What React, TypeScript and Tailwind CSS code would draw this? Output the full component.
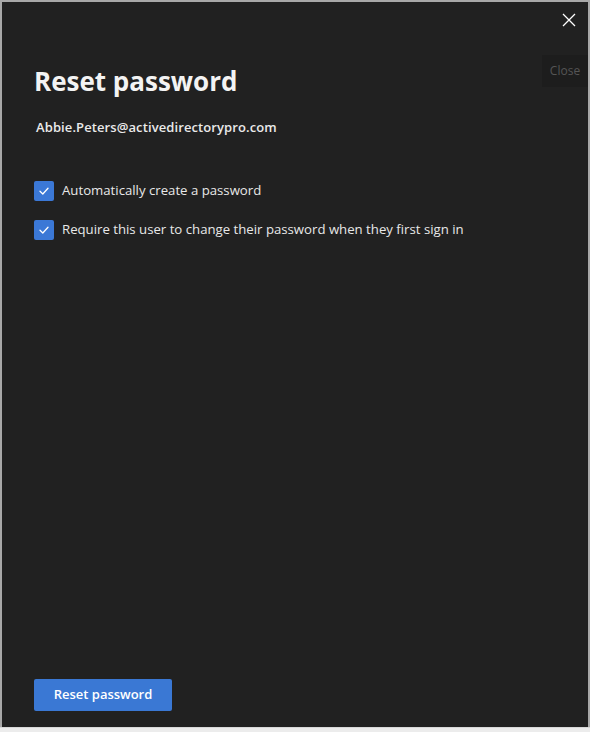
import React, { useState } from 'react';

const Check: React.FC<{ checked: boolean; onToggle: () => void; label: string }> = ({ checked, onToggle, label }) => (
    <label className="flex items-center gap-2 cursor-pointer" onClick={onToggle}>
        <span className={`w-5 h-5 rounded-[2px] flex items-center justify-center ${checked ? 'bg-[#3b78d6]' : 'border border-[#aaa]'}`}>
            {checked && (
                <svg width="12" height="12" viewBox="0 0 12 12" fill="none">
                    <path d="M2 6.3 L4.8 9 L10 3.2" stroke="white" strokeWidth="1.3" strokeLinecap="round" strokeLinejoin="round" />
                </svg>
            )}
        </span>
        <span className="text-[13.2px] text-[#e8e8e8]">{label}</span>
    </label>
);

export default function App() {
    const [auto, setAuto] = useState(true);
    const [require, setRequire] = useState(true);

    return (
        <div className="w-[590px] h-[732px] bg-[#a8a8a8] flex flex-col" style={{ fontFamily: '"Open Sans", "Noto Sans", sans-serif' }}>
            <div className="relative mx-[2px] mt-[2px] h-[725px] bg-[#212121] flex flex-col px-[32px]">
                {/* Close button + tooltip */}
                <button className="absolute right-[10px] top-[9px] w-[18px] h-[18px] flex items-center justify-center text-white">
                    <svg width="14" height="14" viewBox="0 0 14 14" fill="none">
                        <path d="M1 1 L13 13 M13 1 L1 13" stroke="white" strokeWidth="1.3" />
                    </svg>
                </button>
                <div className="absolute right-0 top-[53px] w-[46px] h-[32px] bg-[#1d1d1d] flex items-center justify-center text-[12px] text-[#555]">
                    Close
                </div>

                <h1 className="mt-[61px] text-[26px] font-bold text-[#f3f3f3] leading-[36px]">Reset password</h1>
                <p className="mt-[18px] ml-[2px] text-[13px] font-semibold text-[#eaeaea] leading-[20px] tracking-[0.1px]">Abbie.Peters@activedirectorypro.com</p>

                <div className="mt-[44px] flex flex-col gap-[19px]">
                    <Check checked={auto} onToggle={() => setAuto(!auto)} label="Automatically create a password" />
                    <Check checked={require} onToggle={() => setRequire(!require)} label="Require this user to change their password when they first sign in" />
                </div>

                <div className="flex-1" />

                <button className="mb-[16px] w-[138px] h-[32px] rounded-[2px] bg-[#3a78d4] text-white text-[13px] font-semibold">
                    Reset password
                </button>
            </div>
            <div className="flex-1 bg-[#ececec] border-t border-[#d8d8d8]" />
        </div>
    );
}
